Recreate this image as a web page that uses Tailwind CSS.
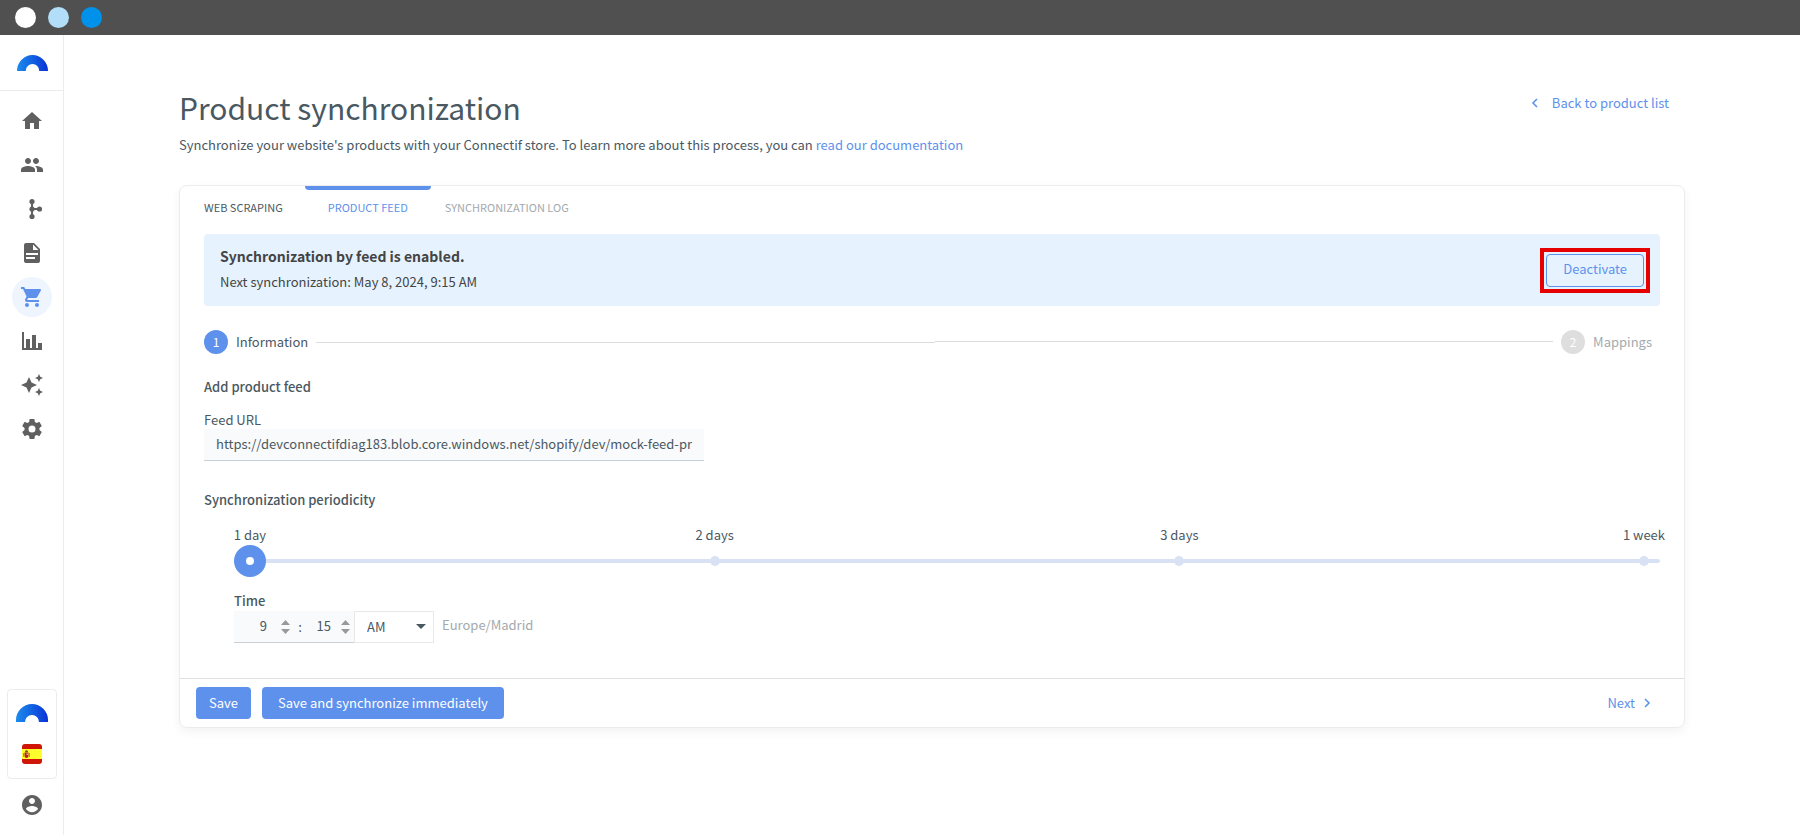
<!DOCTYPE html>
<html lang="en">
<head>
<meta charset="utf-8">
<meta name="viewport" content="width=device-width, initial-scale=1">
<title>Product synchronization</title>
<script src="https://cdn.jsdelivr.net/npm/@tailwindcss/browser@4"></script>
</head>
<body class="flex min-h-screen flex-col bg-white font-['Noto_Sans_CJK_SC','Noto_Sans',sans-serif] text-[13px] leading-5 text-[#4a5862]">
  <div class="flex h-[35px] shrink-0 items-center gap-3 bg-[#505050] px-[15px] pb-px">
    <span class="size-[21px] rounded-full bg-white"></span>
    <span class="size-[21px] rounded-full bg-[#b3def9]"></span>
    <span class="size-[21px] rounded-full bg-[#0092ea]"></span>
  </div>

  <div class="flex grow">
    <aside class="flex w-16 shrink-0 flex-col border-r border-[#ececec] text-[#606060]">
      <a href="#" aria-label="Connectif" class="flex h-14 items-center justify-center border-b border-[#ececec] pl-px">
        <svg class="h-4 w-[31px]" viewBox="0 0 32 16" preserveAspectRatio="none"><defs><linearGradient id="arc"><stop offset="0" stop-color="#1c8cec"/><stop offset=".5" stop-color="#1261e2"/><stop offset="1" stop-color="#0a32d6"/></linearGradient></defs><path fill="url(#arc)" d="M0 16a16 16 0 0 1 32 0h-9a7 7 0 0 0-14 0z"/></svg>
      </a>
      <nav class="flex flex-col items-center gap-1 pt-[10px]">
        <a href="#" aria-label="Home" class="flex size-10 items-center justify-center rounded-full"><svg class="size-6" viewBox="0 0 24 24" fill="currentColor"><path d="M10 20v-6h4v6h5v-8h3L12 3 2 12h3v8z"/></svg></a>
        <a href="#" aria-label="Contacts" class="flex size-10 items-center justify-center rounded-full"><svg class="size-6" viewBox="0 0 24 24" fill="currentColor"><path d="M16 11c1.66 0 2.99-1.34 2.99-3S17.66 5 16 5c-1.66 0-3 1.34-3 3s1.34 3 3 3zm-8 0c1.66 0 2.99-1.34 2.99-3S9.66 5 8 5C6.34 5 5 6.34 5 8s1.34 3 3 3zm0 2c-2.33 0-7 1.17-7 3.5V19h14v-2.5c0-2.33-4.67-3.5-7-3.5zm8 0c-.29 0-.62.02-.97.05 1.16.84 1.97 1.97 1.97 3.45V19h6v-2.5c0-2.33-4.67-3.5-7-3.5z"/></svg></a>
        <a href="#" aria-label="Workflows" class="flex size-10 items-center justify-center rounded-full"><svg class="size-6" viewBox="0 0 24 24" fill="currentColor"><path d="M12 4v16M12 12h7" fill="none" stroke="currentColor" stroke-width="2"/><circle cx="12" cy="4.5" r="2.6"/><circle cx="12" cy="12" r="2.6"/><circle cx="12" cy="19.5" r="2.6"/><circle cx="19.5" cy="12" r="2.6"/></svg></a>
        <a href="#" aria-label="Content" class="flex size-10 items-center justify-center rounded-full"><svg class="size-6" viewBox="0 0 24 24" fill="currentColor"><path d="M6 2a2 2 0 0 0-2 2v16a2 2 0 0 0 2 2h12a2 2 0 0 0 2-2V8l-6-6zm7 1.500L18.500 9H13zM6 12h12v2H6zm0 4h9v2H6z" fill-rule="evenodd"/></svg></a>
        <a href="#" aria-label="Products" aria-current="page" class="flex size-10 items-center justify-center rounded-full bg-[#eff5ff] text-[#5e91ec]"><svg class="size-6" viewBox="0 0 24 24" fill="currentColor"><path d="M17,18A2,2 0 0,1 19,20A2,2 0 0,1 17,22C15.890,22 15,21.100 15,20C15,18.890 15.890,18 17,18M1,2H4.270L5.210,4H20A1,1 0 0,1 21,5C21,5.170 20.950,5.340 20.880,5.500L17.300,11.970C16.960,12.580 16.300,13 15.550,13H8.100L7.200,14.630L7.170,14.750A.25,.25 0 0,0 7.420,15H19V17H7C5.890,17 5,16.100 5,15C5,14.650 5.090,14.320 5.240,14.040L6.600,11.590L3,4H1V2M7,18A2,2 0 0,1 9,20A2,2 0 0,1 7,22C5.890,22 5,21.100 5,20C5,18.890 5.890,18 7,18Z"/></svg></a>
        <a href="#" aria-label="Reports" class="flex size-10 items-center justify-center rounded-full"><svg class="size-6" viewBox="0 0 24 24" fill="currentColor"><path d="M22,21H2V3H4V19H6V10H10V19H12V6H16V19H18V14H22V21Z"/></svg></a>
        <a href="#" aria-label="Recommendations" class="flex size-10 items-center justify-center rounded-full"><svg class="size-6" viewBox="0 0 24 24" fill="currentColor"><path d="M19 9l1.250-2.750L23 5l-2.750-1.250L19 1l-1.250 2.750L15 5l2.750 1.250L19 9zm-7.500.5L9 4 6.500 9.500 1 12l5.500 2.500L9 20l2.500-5.500L17 12l-5.500-2.500zM19 15l-1.250 2.750L15 19l2.750 1.250L19 23l1.250-2.750L23 19l-2.750-1.250L19 15z"/></svg></a>
        <a href="#" aria-label="Settings" class="flex size-10 items-center justify-center rounded-full"><svg class="size-6" viewBox="0 0 24 24" fill="currentColor"><path d="M12,15.500A3.500,3.500 0 0,1 8.500,12A3.500,3.500 0 0,1 12,8.500A3.500,3.500 0 0,1 15.500,12A3.500,3.500 0 0,1 12,15.500M19.430,12.970C19.470,12.650 19.500,12.330 19.500,12C19.500,11.670 19.470,11.340 19.430,11L21.540,9.370C21.730,9.220 21.780,8.950 21.660,8.730L19.660,5.270C19.540,5.050 19.270,4.960 19.050,5.050L16.560,6.050C16.040,5.660 15.500,5.320 14.870,5.070L14.500,2.420C14.460,2.180 14.250,2 14,2H10C9.750,2 9.540,2.180 9.500,2.420L9.130,5.070C8.500,5.320 7.960,5.660 7.440,6.050L4.950,5.050C4.730,4.960 4.460,5.050 4.340,5.270L2.340,8.730C2.210,8.950 2.270,9.220 2.460,9.370L4.570,11C4.530,11.340 4.500,11.670 4.500,12C4.500,12.330 4.530,12.650 4.570,12.970L2.460,14.630C2.270,14.780 2.210,15.050 2.340,15.270L4.340,18.730C4.460,18.950 4.730,19.030 4.950,18.950L7.440,17.940C7.960,18.340 8.500,18.680 9.130,18.930L9.500,21.580C9.540,21.820 9.750,22 10,22H14C14.250,22 14.460,21.820 14.500,21.580L14.870,18.930C15.500,18.670 16.040,18.340 16.560,17.940L19.050,18.950C19.270,19.030 19.540,18.950 19.660,18.730L21.660,15.270C21.780,15.050 21.730,14.780 21.540,14.630L19.430,12.970Z"/></svg></a>
      </nav>
      <div class="mt-auto flex flex-col items-center gap-[14px] pb-[18px]">
        <button type="button" aria-label="Store: Spain" class="flex w-[50px] flex-col items-center gap-[22px] rounded border border-[#ececec] pt-[14px] pb-[14px]">
          <svg class="h-[18px] w-8" viewBox="0 0 32 18"><path fill="url(#arc)" d="M0 18V16a16 16 0 0 1 32 0v2h-9a7 7 0 0 0-14 0z"/></svg>
          <svg class="size-5" viewBox="0 0 20 20"><clipPath id="flag"><rect width="20" height="20" rx="3"/></clipPath><g clip-path="url(#flag)"><path fill="#cf1506" d="M0 0h20v20H0z"/><path fill="#ffff2e" d="M0 5h20v10H0z"/><path d="M1 9h1v4H1zM7 9h1v4H7z" fill="#b98a6a"/><path fill="#b0241c" d="M2.500 8.500h4v3.500a2 2 0 0 1-4 0z"/><path fill="#8a5a20" d="M3 7l1.500-1L6 7v1.300H3z"/><path fill="#d9b0a0" d="M4.500 9.500h1.500v1.500H4.500z"/></g></svg>
        </button>
        <a href="#" aria-label="Account"><svg class="size-6" viewBox="0 0 24 24" fill="currentColor"><path d="M12 2C6.480 2 2 6.480 2 12s4.480 10 10 10 10-4.480 10-10S17.520 2 12 2zm0 3c1.660 0 3 1.340 3 3s-1.340 3-3 3-3-1.340-3-3 1.340-3 3-3zm0 14.200c-2.500 0-4.710-1.280-6-3.220.03-1.990 4-3.080 6-3.080 1.990 0 5.970 1.090 6 3.080-1.290 1.940-3.500 3.220-6 3.220z"/></svg></a>
      </div>
    </aside>

    <main class="min-w-0 grow px-[115px] pt-12 pb-10">
      <header class="flex items-start justify-between">
        <div>
          <h1 class="text-[30px] leading-[48px]">Product synchronization</h1>
          <p class="mt-1">Synchronize your website's products with your Connectif store. To learn more about this process, you can <a href="#" class="text-[#5e91ec]">read our documentation</a></p>
        </div>
        <a href="#" class="mt-[10px] mr-4 flex items-center gap-[11px] text-[#5e91ec]">
          <svg class="size-3" viewBox="0 0 12 12" fill="none" stroke="currentColor" stroke-width="1.600"><path d="M8 2 4 6l4 4"/></svg>Back to product list</a>
      </header>

      <section class="mt-[30px] rounded-lg border border-[#ececec] shadow-[0_4px_10px_rgba(0,0,0,0.05)]">
        <div role="tablist" class="flex text-[11px]">
          <button type="button" role="tab" class="h-11 pr-[22px] pb-[2px] pl-6">WEB SCRAPING</button>
          <button type="button" role="tab" aria-selected="true" class="relative h-11 px-[23px] pb-[2px] text-[#5e91ec]"><span class="absolute inset-x-0 top-0 h-1 rounded-b bg-[#5e91ec]"></span>PRODUCT FEED</button>
          <button type="button" role="tab" class="h-11 px-[14px] pb-[2px] text-[#a4a9ad]">SYNCHRONIZATION LOG</button>
        </div>

        <div class="px-6 pt-1 pb-[35px]">
          <div class="flex h-[72px] items-center justify-between rounded bg-[#e6f3ff] px-4 text-[#444]">
            <div class="pb-1">
              <h2 class="text-sm leading-6 font-bold">Synchronization by feed is enabled.</h2>
              <p class="mt-1">Next synchronization: May 8, 2024, 9:15 AM</p>
            </div>
            <div class="relative">
              <button type="button" class="block h-[33px] rounded border border-[#5e91ec] px-4 pb-[2px] text-[#5e91ec]">Deactivate</button>
              <span class="pointer-events-none absolute -inset-[6px] border-4 border-[#e60000]"></span>
            </div>
          </div>

          <ol class="mt-6 flex items-center pr-2">
            <li class="flex items-center gap-2"><span class="flex size-6 items-center justify-center rounded-full bg-[#5e91ec] text-xs text-white">1</span>Information</li>
            <li aria-hidden="true" class="ml-2 h-px flex-1 bg-[#dcdcdc]"></li>
            <li aria-hidden="true" class="mr-2 mb-[2px] h-px flex-1 bg-[#dcdcdc]"></li>
            <li class="flex items-center gap-2 text-[#a4a9ad]"><span class="flex size-6 items-center justify-center rounded-full bg-[#dedede] text-xs text-white">2</span>Mappings</li>
          </ol>

          <h3 class="mt-[23px] font-medium">Add product feed</h3>
          <label for="feed" class="mt-[13px] block">Feed URL</label>
          <input id="feed" type="text" value="https://devconnectifdiag183.blob.core.windows.net/shopify/dev/mock-feed-products.xml" class="-mt-px block h-8 w-[500px] border-b border-[#c8d0d8] bg-[#f9fafc] px-3 pb-[2px]">

          <h3 class="mt-[29px] font-medium" id="period">Synchronization periodicity</h3>
          <div class="mt-[15px] ml-[30px]">
            <div class="flex justify-between px-4">
              <span class="flex w-0 justify-center whitespace-nowrap">1 day</span>
              <span class="flex w-0 justify-center whitespace-nowrap">2 days</span>
              <span class="flex w-0 justify-center whitespace-nowrap">3 days</span>
              <span class="flex w-0 justify-center whitespace-nowrap">1 week</span>
            </div>
            <div class="relative h-8">
              <div class="absolute inset-0 flex items-center justify-between px-[11px]">
                <i class="size-[10px] rounded-full bg-[#d8e2f4]"></i><i class="size-[10px] rounded-full bg-[#d8e2f4]"></i><i class="size-[10px] rounded-full bg-[#d8e2f4]"></i><i class="size-[10px] rounded-full bg-[#d8e2f4]"></i>
              </div>
              <input type="range" min="0" max="3" value="0" aria-labelledby="period" class="relative block h-8 w-full appearance-none bg-transparent [&::-webkit-slider-runnable-track]:h-1 [&::-webkit-slider-runnable-track]:rounded-full [&::-webkit-slider-runnable-track]:bg-[#d8e2f4] [&::-webkit-slider-thumb]:-mt-[14px] [&::-webkit-slider-thumb]:size-8 [&::-webkit-slider-thumb]:appearance-none [&::-webkit-slider-thumb]:rounded-full [&::-webkit-slider-thumb]:border-[12px] [&::-webkit-slider-thumb]:border-[#5e91ec] [&::-webkit-slider-thumb]:bg-white">
            </div>

            <label for="hour" class="mt-[14px] block font-medium">Time</label>
            <div class="flex items-center">
              <div class="flex h-8 w-[120px] items-center border-b border-[#c8d0d8] bg-[#f9fafc]">
                <input id="hour" type="number" value="9" class="w-[33px] appearance-none bg-transparent pb-px text-right [&::-webkit-inner-spin-button]:appearance-none">
                <svg class="ml-[14px] h-[14px] w-[9px]" viewBox="0 0 9 14" fill="#999"><path d="M0 5l4.500-5L9 5zM0 9h9l-4.500 5z"/></svg>
                <span class="w-5 text-center">:</span>
                <input aria-label="Minutes" type="number" value="15" class="w-[21px] appearance-none bg-transparent pb-px text-right [&::-webkit-inner-spin-button]:appearance-none">
                <svg class="ml-[10px] h-[14px] w-[9px]" viewBox="0 0 9 14" fill="#999"><path d="M0 5l4.500-5L9 5zM0 9h9l-4.500 5z"/></svg>
              </div>
              <div class="relative">
                <select aria-label="AM or PM" class="block h-8 w-20 appearance-none border border-[#e8e8e8] bg-white px-3"><option>AM</option><option>PM</option></select>
                <svg class="pointer-events-none absolute top-[13px] right-2 h-[5px] w-[10px]" viewBox="0 0 10 5" fill="#4a5862"><path d="M0 0h10L5 5z"/></svg>
              </div>
              <span class="ml-2 pb-1 text-[#a4a9ad]">Europe/Madrid</span>
            </div>
          </div>
        </div>

        <footer class="flex h-[49px] items-center border-t border-[#e0e0e0] pr-[31px] pl-4">
          <button type="button" class="h-8 rounded bg-[#5e91ec] px-[13px] pb-px text-white">Save</button>
          <button type="button" class="ml-[11px] h-8 rounded bg-[#5e91ec] px-4 pb-px text-white">Save and synchronize immediately</button>
          <button type="button" class="ml-auto flex items-center gap-[6px] pb-px text-[#5e91ec]">Next<svg class="size-3" viewBox="0 0 12 12" fill="none" stroke="currentColor" stroke-width="1.600"><path d="m4 2 4 4-4 4"/></svg></button>
        </footer>
      </section>
    </main>
  </div>
</body>
</html>
